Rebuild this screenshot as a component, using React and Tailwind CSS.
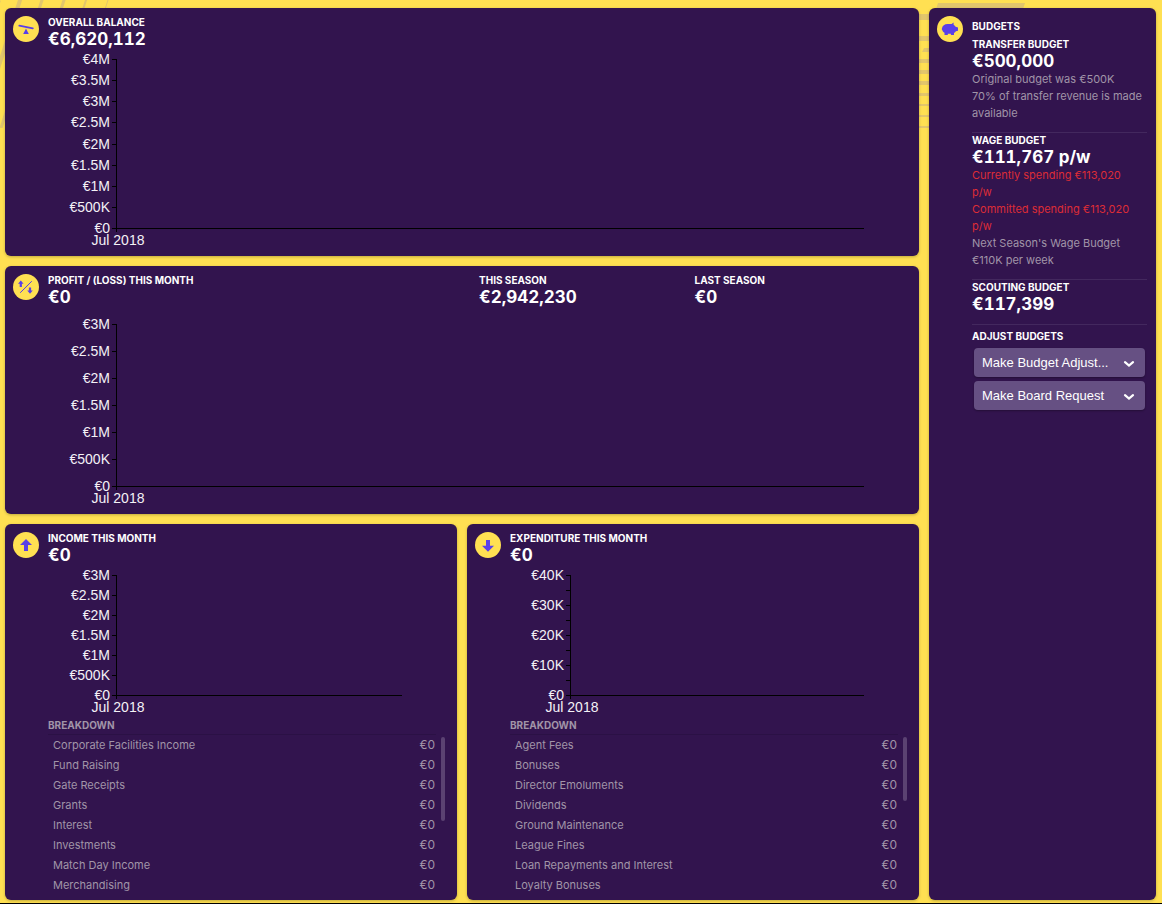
import React from "react";

const INK = "#5a3fe8";

function IconBadge({ children }) {
  return (
    <svg viewBox="0 0 26 26" className="mt-px h-[26px] w-[26px] shrink-0" aria-hidden="true">
      <circle cx="13" cy="13" r="13" fill="#ffe052" />
      {children}
    </svg>
  );
}

const BalanceIcon = () => (
  <IconBadge>
    <path d="M6.3 9.6 19.8 12.4" stroke={INK} strokeWidth="1.8" strokeLinecap="round" />
    <path d="M13 12.6 15.8 18H10.2Z" fill={INK} />
  </IconBadge>
);

const ProfitLossIcon = () => (
  <IconBadge>
    <path d="M7.2 18.8 18.8 7.2" stroke={INK} strokeWidth="1" />
    <path d="M7.8 6.6 10.6 9.8H8.9V13H6.7V9.8H5Z" fill={INK} />
    <path d="M17 19.8 14.2 16.6H15.9V13.6H18.1V16.6H19.8Z" fill={INK} />
  </IconBadge>
);

const UpIcon = () => (
  <IconBadge>
    <path d="M13 7 19 13H15V19H11V13H7Z" fill={INK} />
  </IconBadge>
);

const DownIcon = () => (
  <IconBadge>
    <path d="M13 19.7 7 13.7H11V7.9H15V13.7H19Z" fill={INK} />
  </IconBadge>
);

const PiggyIcon = () => (
  <IconBadge>
    <path
      d="M5 12.2C5.3 9.8 7.6 8 10.6 8H14.6L16.6 6.6V8.8C17.5 9.3 18.2 10 18.6 10.8L21 11.4V14.8L18.9 15.3C18.4 16 17.8 16.6 17 17V19H13.9V17.7H10.8V19H7.5V16.8C6.3 16.1 5.6 15.2 5.4 14.2L4.9 14V12.2Z"
      fill={INK}
    />
  </IconBadge>
);

function Figure({ label, value }) {
  return (
    <div className="min-w-0">
      <h2 className="text-[10px] leading-[14px] font-bold text-white uppercase">{label}</h2>
      <p className="text-[17px] leading-5 font-bold text-white tabular-nums">{value}</p>
    </div>
  );
}

function Panel({ icon, figures, children }) {
  return (
    <section className="flex min-h-[248px] min-w-0 flex-col rounded-md bg-[#32144e] pt-[7px] pb-[5px] shadow-[0_1px_3px_rgba(0,0,0,0.25)]">
      <header className="flex h-[33px] shrink-0 gap-[9px] pr-[9px] pl-2">
        {icon}
        <div className="grid flex-1 grid-cols-[2fr_1fr_1fr]">
          {figures.map((f) => (
            <Figure key={f.label} {...f} />
          ))}
        </div>
      </header>
      {children}
    </section>
  );
}

function Chart({ title, ticks, span, top = 11, axisX = 111 }) {
  const step = span / (ticks.length - 1);
  const base = top + span;
  return (
    <div className="pr-[55px]">
      <svg
        role="img"
        aria-label={title}
        width="100%"
        height={base + 22}
        className="block font-['Liberation_Sans',Arial,sans-serif] text-[14px]"
        fill="#f4f1f6"
      >
        {ticks.map((label, i) => {
          const y = Math.round(top + i * step);
          return (
            <g key={i}>
              <rect x={axisX - 4} y={y} width="4" height="1" fill="#000" />
              {label && (
                <text x={axisX - 6} y={y + 5} textAnchor="end">
                  {label}
                </text>
              )}
            </g>
          );
        })}
        <rect x={axisX} y={top} width="1" height={span + 4} fill="#000" />
        <line x1={axisX} x2="100%" y1={base + 0.5} y2={base + 0.5} stroke="#000" />
        <text x={axisX + 2} y={base + 17} textAnchor="middle">
          Jul 2018
        </text>
      </svg>
    </div>
  );
}

function Breakdown({ id, items, thumb }) {
  return (
    <div className="pr-3 pl-[43px]">
      <h3 id={id} className="mr-[9px] border-b border-[#2b1145] text-[10px] leading-[17px] font-bold text-[#a195a8]">
        BREAKDOWN
      </h3>
      <div className="flex gap-[6px]">
        <table aria-labelledby={id} className="flex-1 text-[11px] text-[#a195a8]">
          <tbody className="block w-full">
            {items.map((name) => (
              <tr key={name} className="flex h-5 items-center justify-between pl-[5px] leading-5">
                <th scope="row" className="text-left font-normal">{name}</th>
                <td className="text-right text-[12px]">€0</td>
              </tr>
            ))}
          </tbody>
        </table>
        <div className={`mt-[2px] w-1 rounded-full bg-[#5b4272] ${thumb}`} />
      </div>
    </div>
  );
}

function BudgetBlock({ label, value, children }) {
  return (
    <div className="border-b border-[#43285e] pb-[10px]">
      <Figure label={label} value={value} />
      {children && <div className="pr-1 text-[11px] leading-[17px] text-[#a195a8]">{children}</div>}
    </div>
  );
}

function ActionSelect({ label }) {
  return (
    <div className="relative">
      <select
        aria-label={label}
        className="block h-[29px] w-full appearance-none rounded bg-[#665083] pr-8 pl-2 font-['Liberation_Sans',Arial,sans-serif] text-[13px] text-white shadow-[0_1px_2px_rgba(0,0,0,0.3)]"
      >
        <option>{label}</option>
      </select>
      <svg viewBox="0 0 12 8" className="pointer-events-none absolute top-3 right-[10px] h-2 w-3" aria-hidden="true">
        <path d="M2 2.2 6 5.6 10 2.2" fill="none" stroke="#fff" strokeWidth="2.2" strokeLinecap="round" />
      </svg>
    </div>
  );
}

function Backdrop() {
  return (
    <div className="pointer-events-none absolute inset-x-0 top-0 flex justify-between overflow-hidden" aria-hidden="true">
      <svg width="130" height="128" stroke="#e2c66c">
        <path d="M-1 0-4 8" strokeWidth="4" />
        <path d="M21-3-21 128" strokeWidth="4" />
        <path d="M43-3 1 128" strokeWidth="3" />
        <path d="M65-3 23 128" strokeWidth="3" />
        <path d="M87-3 45 128" strokeWidth="2" />
        <path d="M109-3 67 128" strokeWidth="1" />
      </svg>
      <svg width="250" height="130" fill="#e2c66c">
        <path d="M26 3H113L111 9H24ZM7 14H18V20H7ZM7 36H18V41H7ZM12 48H18V52H10ZM7 59H18V63H7ZM7 70H18V74H7ZM7 81H18V85H7ZM7 93H18V96H7ZM7 104H18V106H7ZM7 115H18V117H7ZM7 126H18V128H7Z" />
      </svg>
    </div>
  );
}

const INCOME = [
  "Corporate Facilities Income",
  "Fund Raising",
  "Gate Receipts",
  "Grants",
  "Interest",
  "Investments",
  "Match Day Income",
  "Merchandising",
];

const EXPENDITURE = [
  "Agent Fees",
  "Bonuses",
  "Director Emoluments",
  "Dividends",
  "Ground Maintenance",
  "League Fines",
  "Loan Repayments and Interest",
  "Loyalty Bonuses",
];

const TO_3M = ["€3M", "€2.5M", "€2M", "€1.5M", "€1M", "€500K", "€0"];

export default function App() {
  return (
    <div className="relative min-h-screen border-b border-black bg-[#ffe052] font-[Inter,sans-serif]">
      <Backdrop />
      <main className="relative grid grid-cols-[minmax(0,1fr)_227px] gap-[10px] pt-2 pr-[6px] pb-[3px] pl-[5px]">
        <div className="flex min-w-0 flex-col gap-[10px]">
          <Panel icon={<BalanceIcon />} figures={[{ label: "Overall balance", value: "€6,620,112" }]}>
            <Chart title="Overall balance" ticks={["€4M", "€3.5M", ...TO_3M]} span={169} />
          </Panel>
          <Panel
            icon={<ProfitLossIcon />}
            figures={[
              { label: "Profit / (loss) this month", value: "€0" },
              { label: "This season", value: "€2,942,230" },
              { label: "Last season", value: "€0" },
            ]}
          >
            <Chart title="Profit and loss" ticks={TO_3M} span={162} top={18} />
          </Panel>
          <div className="grid grid-cols-2 gap-[10px]">
            <Panel icon={<UpIcon />} figures={[{ label: "Income this month", value: "€0" }]}>
              <Chart title="Income" ticks={TO_3M} span={120} />
              <Breakdown id="income-breakdown" items={INCOME} thumb="h-[84px]" />
            </Panel>
            <Panel icon={<DownIcon />} figures={[{ label: "Expenditure this month", value: "€0" }]}>
              <Chart
                title="Expenditure"
                ticks={["€40K", "", "€30K", "", "€20K", "", "€10K", "", "€0"]}
                span={120}
                axisX={103}
              />
              <Breakdown id="expenditure-breakdown" items={EXPENDITURE} thumb="h-16" />
            </Panel>
          </div>
        </div>

        <aside className="flex gap-[9px] rounded-md bg-[#32144e] pt-[7px] pr-[9px] pl-2 shadow-[0_1px_3px_rgba(0,0,0,0.25)]">
          <PiggyIcon />
          <div className="min-w-0 flex-1 pt-1">
            <h1 className="mb-1 text-[10px] leading-[14px] font-bold text-white">BUDGETS</h1>
            <BudgetBlock label="Transfer budget" value="€500,000">
              <p>Original budget was €500K</p>
              <p>70% of transfer revenue is made available</p>
            </BudgetBlock>
            <BudgetBlock label="Wage budget" value="€111,767 p/w">
              <p className="text-[#dd2c36]">Currently spending €113,020 p/w</p>
              <p className="text-[#dd2c36]">Committed spending €113,020 p/w</p>
              <p>Next Season's Wage Budget €110K per week</p>
            </BudgetBlock>
            <BudgetBlock label="Scouting budget" value="€117,399" />
            <h2 className="mt-1 mb-[5px] text-[10px] leading-[14px] font-bold text-white">ADJUST BUDGETS</h2>
            <div className="flex flex-col gap-1 px-[2px]">
              <ActionSelect label="Make Budget Adjust..." />
              <ActionSelect label="Make Board Request" />
            </div>
          </div>
        </aside>
      </main>
    </div>
  );
}
